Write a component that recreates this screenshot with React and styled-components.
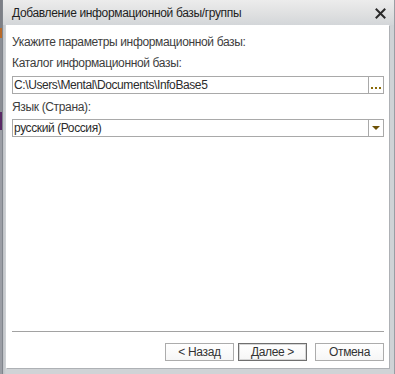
import React from "react";
import styled, { createGlobalStyle } from "styled-components";

const Global = createGlobalStyle`
  html, body { margin: 0; padding: 0; background: #5d6068; }
  body { font-family: "Liberation Sans", Arial, sans-serif; }
`;

const Screen = styled.div`
  width: 395px;
  height: 374px;
  display: flex;
  overflow: hidden;
`;

const Backdrop = styled.div`
  width: 2px;
  background: linear-gradient(
    to bottom,
    #7c7f86 0px, #7c7f86 28px,
    #b86a2a 28px, #b86a2a 38px,
    #8a8d94 38px, #8a8d94 112px,
    #5a2a66 112px, #5a2a66 130px,
    #9a9da4 130px
  );
`;

const Window = styled.div`
  flex: 1;
  display: flex;
  flex-direction: column;
  border-left: 1px solid #80858c;
  border-right: 1px solid #9a9ea4;
  background: linear-gradient(to right, #b9bdc2 0px, #d3d6d9 4px, #d3d6d9 100%);
`;

const TitleBar = styled.div`
  height: 25px;
  display: flex;
  align-items: center;
  justify-content: space-between;
  padding: 1px 8px 0 9px;
  box-sizing: border-box;
  background: linear-gradient(to bottom, #ececec 0%, #dedfe0 60%, #d3d6d9 100%);
`;

const Title = styled.span`
  font-size: 12px;
  letter-spacing: -0.35px;
  color: #1e1e1e;
`;

const CloseIcon = styled.svg`
  width: 11px;
  height: 11px;
  display: block;
`;

const FrameBody = styled.div`
  flex: 1;
  display: flex;
  padding: 0 5px 6px 3px;
  background: linear-gradient(to right, #bfc2c6 0px, #d0d3d6 3px, #d0d3d6 100%);
`;

const Content = styled.div`
  flex: 1;
  background: #ffffff;
  display: flex;
  flex-direction: column;
  padding: 10px 5px 7px 6px;
  box-shadow: 1px 1px 0 #aeb1b5;
`;

const Label = styled.div`
  font-size: 12px;
  line-height: 14px;
  letter-spacing: -0.35px;
  color: #3d3d3d;
  margin-top: ${(p) => p.$mt || 0}px;
`;

const Field = styled.div`
  height: 18px;
  box-sizing: border-box;
  border: 1px solid #a9a9a9;
  display: flex;
  align-items: stretch;
  margin-top: ${(p) => p.$mt || 0}px;
`;

const FieldText = styled.div`
  flex: 1;
  font-size: 12px;
  line-height: 16px;
  letter-spacing: -0.4px;
  padding-left: 1px;
  color: #2b2b2b;
  white-space: nowrap;
  overflow: hidden;
`;

const FieldButton = styled.div`
  width: 15px;
  border-left: 1px solid #a9a9a9;
  display: flex;
  align-items: ${(p) => (p.$bottom ? "flex-end" : "center")};
  justify-content: center;
  padding-bottom: ${(p) => (p.$bottom ? 4 : 0)}px;
  box-sizing: border-box;
`;

const Dots = styled.div`
  display: flex;
  gap: 2px;
`;

const Dot = styled.span`
  width: 2px;
  height: 2px;
  background: #8a6a08;
`;

const Triangle = styled.span`
  width: 0;
  height: 0;
  border-left: 4px solid transparent;
  border-right: 4px solid transparent;
  border-top: 4px solid #6e5206;
`;

const Spacer = styled.div`
  flex: 1;
`;

const Separator = styled.div`
  height: 1px;
  background: #a2a2a2;
  margin-bottom: 11px;
`;

const ButtonRow = styled.div`
  display: flex;
  justify-content: flex-end;
  gap: 4px;
`;

const Button = styled.div`
  width: 69px;
  height: 18px;
  box-sizing: border-box;
  border: 1px solid ${(p) => (p.$default ? "#6f6f6f" : "#acacac")};
  box-shadow: ${(p) => (p.$default ? "inset 0 0 0 1px #d6d6d6" : "none")};
  background: linear-gradient(to bottom, #ffffff, #f6f6f6);
  font-size: 12px;
  line-height: 16px;
  letter-spacing: -0.35px;
  color: #333333;
  text-align: center;
  margin-left: ${(p) => p.$ml || 0}px;
`;

export default function App() {
  return (
    <>
      <Global />
      <Screen>
        <Backdrop />
        <Window>
          <TitleBar>
            <Title>Добавление информационной базы/группы</Title>
            <CloseIcon viewBox="0 0 11 11">
              <path d="M1.5 1.5 L9.5 9.5 M9.5 1.5 L1.5 9.5" stroke="#2a2a2a" strokeWidth="2" strokeLinecap="square" />
            </CloseIcon>
          </TitleBar>
          <FrameBody>
            <Content>
              <Label>Укажите параметры информационной базы:</Label>
              <Label $mt={7}>Каталог информационной базы:</Label>
              <Field $mt={6}>
                <FieldText>C:\Users\Mental\Documents\InfoBase5</FieldText>
                <FieldButton $bottom>
                  <Dots>
                    <Dot />
                    <Dot />
                    <Dot />
                  </Dots>
                </FieldButton>
              </Field>
              <Label $mt={6}>Язык (Страна):</Label>
              <Field $mt={5}>
                <FieldText>русский (Россия)</FieldText>
                <FieldButton>
                  <Triangle />
                </FieldButton>
              </Field>
              <Spacer />
              <Separator />
              <ButtonRow>
                <Button>&lt; Назад</Button>
                <Button $default>Далее &gt;</Button>
                <Button $ml={4}>Отмена</Button>
              </ButtonRow>
            </Content>
          </FrameBody>
        </Window>
      </Screen>
    </>
  );
}
